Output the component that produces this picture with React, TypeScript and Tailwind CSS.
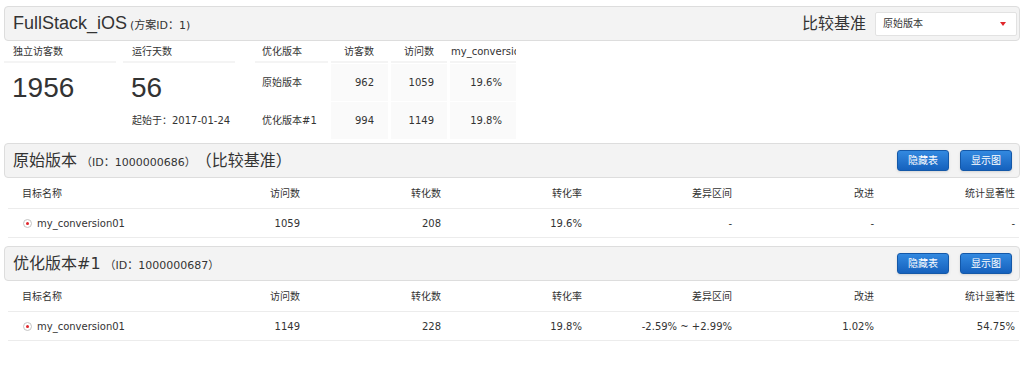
import React from 'react'

const base = "font-['DejaVu_Sans','Noto_Sans_CJK_SC',sans-serif]"
const helv = "font-['Liberation_Sans','Noto_Sans_CJK_SC',sans-serif]"

interface GoalRow {
  name: string
  visits: number
  conversions: number
  rate: string
  interval: string
  improve: string
  significance: string
}

interface Variation {
  title: string
  id: string
  baseline?: boolean
  row: GoalRow
}

const variations: Variation[] = [
  {
    title: '原始版本',
    id: '1000000686',
    baseline: true,
    row: { name: 'my_conversion01', visits: 1059, conversions: 208, rate: '19.6%', interval: '-', improve: '-', significance: '-' },
  },
  {
    title: '优化版本#1',
    id: '1000000687',
    row: { name: 'my_conversion01', visits: 1149, conversions: 228, rate: '19.8%', interval: '-2.59% ~ +2.99%', improve: '1.02%', significance: '54.75%' },
  },
]

const summary = [
  { name: '原始版本', visitors: 962, visits: 1059, rate: '19.6%' },
  { name: '优化版本#1', visitors: 994, visits: 1149, rate: '19.8%' },
]

function BlueButton({ children }: { children: React.ReactNode }) {
  return (
    <button className="h-[21px] w-[52px] rounded-[3px] border border-[#1458a8] bg-gradient-to-b from-[#3389e0] to-[#1561bd] text-white text-[10px] leading-none shadow-sm">
      {children}
    </button>
  )
}

function Radio() {
  return (
    <span className="inline-flex w-[9px] h-[9px] rounded-full border border-[#c4c4c4] bg-white items-center justify-center mr-[5px]">
      <span className="w-[3px] h-[3px] rounded-full bg-[#e0262b]" />
    </span>
  )
}

function StatBlock({ label, value, sub }: { label: string; value: string; sub?: string }) {
  return (
    <div className="w-[112px] flex flex-col">
      <div className="h-[22px] flex items-center pl-[9px] border-b-2 border-[#f4f4f4]">{label}</div>
      <div className={`h-[39px] flex items-end pl-[8px] text-[28px] leading-none ${helv}`}>{value}</div>
      <div className="h-[37px] flex items-center pl-[9px]">{sub}</div>
    </div>
  )
}

function VariationSection({ v }: { v: Variation }) {
  const cols = 'grid grid-cols-[155px_141px_141px_141px_150px_142px_141px]'
  const r = v.row
  return (
    <div>
      <div className="h-[35px] mx-[4px] flex items-center justify-between pl-[8px] pr-[7px] bg-[#f3f3f3] border border-[#dddddd] rounded-[4px]">
        <div className="flex items-baseline">
          <span className="text-[16px]">{v.title}</span>
          <span className="text-[11px] ml-[4px]">（ID：{v.id}）</span>
          {v.baseline && <span className="text-[16px]">（比较基准）</span>}
        </div>
        <div className="flex gap-[11px]">
          <BlueButton>隐藏表</BlueButton>
          <BlueButton>显示图</BlueButton>
        </div>
      </div>
      <div className="ml-[8px] mr-[5px]">
        <div className={`${cols} h-[31px] items-center border-b border-[#ececec]`}>
          <div className="pl-[14px]">目标名称</div>
          <div className="text-right pr-[4px]">访问数</div>
          <div className="text-right pr-[4px]">转化数</div>
          <div className="text-right pr-[4px]">转化率</div>
          <div className="text-right pr-[4px]">差异区间</div>
          <div className="text-right pr-[4px]">改进</div>
          <div className="text-right pr-[4px]">统计显著性</div>
        </div>
        <div className={`${cols} h-[29px] items-center border-b border-[#ececec]`}>
          <div className="pl-[15px] flex items-center"><Radio />{r.name}</div>
          <div className="text-right pr-[4px]">{r.visits}</div>
          <div className="text-right pr-[4px]">{r.conversions}</div>
          <div className="text-right pr-[4px]">{r.rate}</div>
          <div className="text-right pr-[4px]">{r.interval}</div>
          <div className="text-right pr-[4px]">{r.improve}</div>
          <div className="text-right pr-[4px]">{r.significance}</div>
        </div>
      </div>
    </div>
  )
}

export default function App() {
  return (
    <div className={`w-[1024px] h-[366px] bg-white text-[#333] text-[10px] ${base} pt-[6px]`}>
      {/* Experiment header */}
      <div className="h-[35px] mx-[4px] flex items-center justify-between pl-[8px] pr-[2px] bg-[#f3f3f3] border border-[#dddddd] rounded-[4px]">
        <div className="flex items-baseline">
          <span className={`text-[18px] ${helv}`}>FullStack_iOS</span>
          <span className="text-[11px] ml-[3px]">(方案ID：1)</span>
        </div>
        <div className="flex items-center">
          <span className="text-[16px] mr-[9px]">比较基准</span>
          <div className="w-[142px] h-[24px] bg-white border border-[#e2e2e2] rounded-[2px] flex items-center justify-between pl-[7px] pr-[10px]">
            <span>原始版本</span>
            <svg width="6" height="4" viewBox="0 0 6 4"><path d="M0 0h6L3 4z" fill="#e0262b" /></svg>
          </div>
        </div>
      </div>

      {/* Summary stats */}
      <div className="h-[99px] flex ml-[4px]">
        <StatBlock label="独立访客数" value="1956" />
        <div className="w-[7px]" />
        <StatBlock label="运行天数" value="56" sub="起始于：2017-01-24" />
        <div className="w-[20px]" />
        <div className="grid grid-cols-[73px_57px_56px_66px] grid-rows-[22px_37px_37px] gap-x-[3px] gap-y-[1px]">
          <div className="flex items-center pl-[7px] border-b-2 border-[#f4f4f4]">优化版本</div>
          <div className="flex items-center justify-end pr-[14px] border-b-2 border-[#f4f4f4]">访客数</div>
          <div className="flex items-center justify-end pr-[13px] border-b-2 border-[#f4f4f4]">访问数</div>
          <div className="flex items-center pl-[1px] overflow-hidden whitespace-nowrap border-b-2 border-[#f4f4f4]">my_conversion01</div>
          {summary.map((s) => (
            <React.Fragment key={s.name}>
              <div className="flex items-center pl-[7px]">{s.name}</div>
              <div className="flex items-center justify-end pr-[14px] bg-[#fafafa]">{s.visitors}</div>
              <div className="flex items-center justify-end pr-[13px] bg-[#fafafa]">{s.visits}</div>
              <div className="flex items-center justify-end pr-[14px] bg-[#fafafa]">{s.rate}</div>
            </React.Fragment>
          ))}
        </div>
      </div>

      <div className="mt-[3px] flex flex-col gap-[8px]">
        {variations.map((v) => (
          <VariationSection key={v.id} v={v} />
        ))}
      </div>
    </div>
  )
}
